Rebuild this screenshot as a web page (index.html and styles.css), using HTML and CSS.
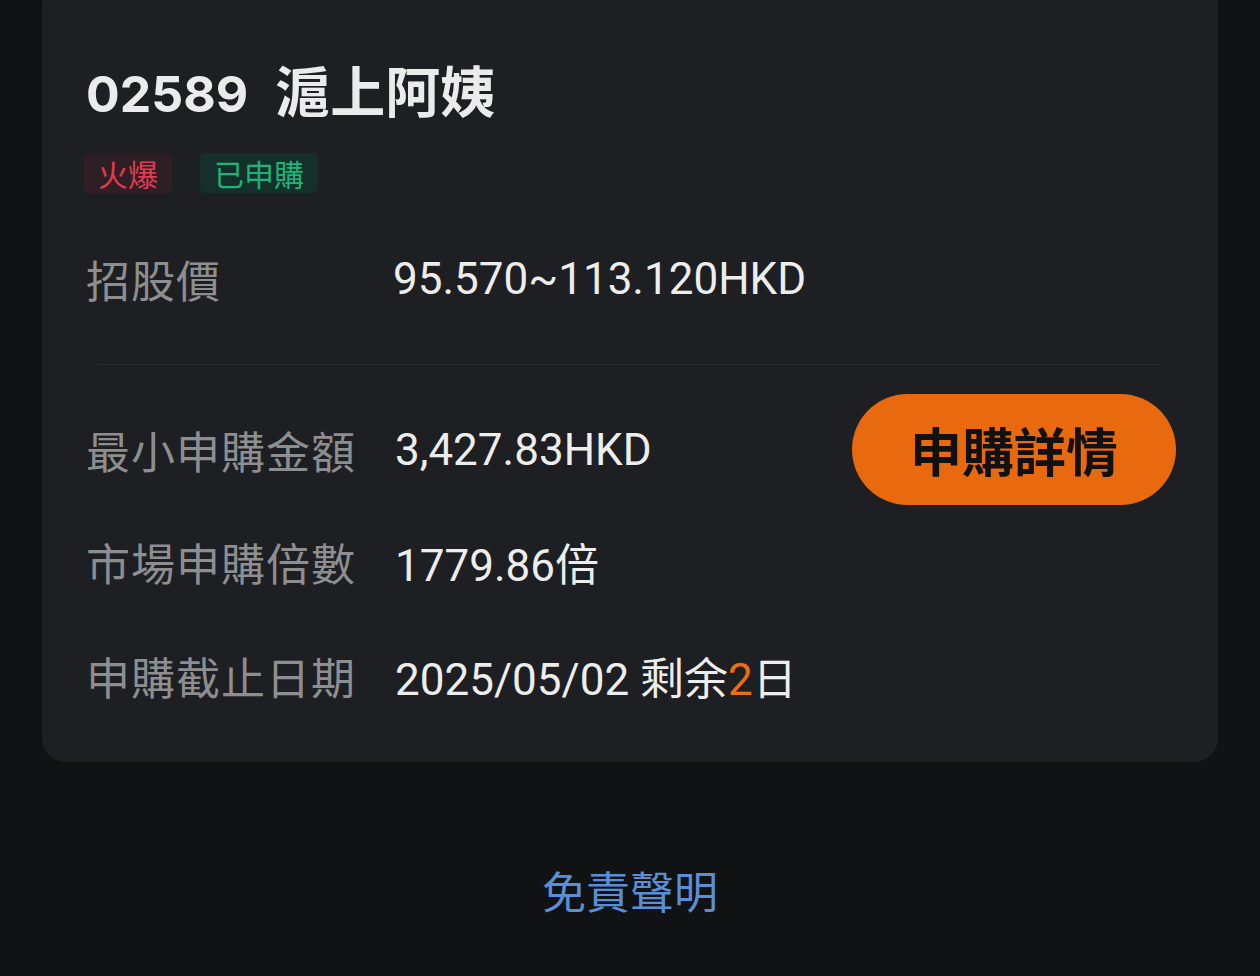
FILE: index.html
```html
<!DOCTYPE html>
<html lang="zh-Hant">
<head>
  <meta charset="UTF-8" />
  <meta name="viewport" content="width=device-width, initial-scale=1.0"/>
  <title>新股認購</title>
  <link rel="stylesheet" href="styles.css">
</head>
<body>
  <div class="card">
    <h1 class="title"><span class="code">02589</span>滬上阿姨</h1>

    <div class="tags">
      <span class="tag tag-hot">火爆</span>
      <span class="tag tag-done">已申購</span>
    </div>

    <div class="row price-row">
      <div class="label">招股價</div>
      <div class="value">95.570~113.120HKD</div>
    </div>

    <div class="divider"></div>

    <div class="details">
      <div class="row">
        <div class="label">最小申購金額</div>
        <div class="value">3,427.83HKD</div>
        <button class="detail-btn">申購詳情</button>
      </div>
      <div class="row">
        <div class="label">市場申購倍數</div>
        <div class="value">1779.86倍</div>
      </div>
      <div class="row">
        <div class="label">申購截止日期</div>
        <div class="value">2025/05/02 剩余<span class="days">2</span>日</div>
      </div>
    </div>
  </div>

  <div class="disclaimer">免責聲明</div>
</body>
</html>
```

FILE: styles.css
```css
* {
  box-sizing: border-box;
  margin: 0;
  padding: 0;
}

body {
  background-color: #111214;
  color: #ececec;
  font-family: Roboto, "Noto Sans CJK TC", sans-serif;
  height: 976px;
  overflow: hidden;
}

.card {
  background-color: #1e1f22;
  margin: -20px 42px 0;
  padding: 83px 44px 29px;
  border-radius: 24px;
}

.title {
  font-size: 55px;
  line-height: 60px;
  font-weight: 700;
  color: #ebebeb;
}

.title .code {
  font-family: Inter, "Noto Sans CJK TC", sans-serif;
  font-size: 50px;
  margin-right: 27px;
}

.tags {
  display: flex;
  gap: 28px;
  margin-top: 29px;
  margin-left: -2px;
}

.tag {
  height: 40px;
  line-height: 40px;
  padding: 0 14px;
  border-radius: 5px;
  font-family: "Noto Sans CJK TC", sans-serif;
  font-size: 30px;
}

.tag-hot {
  background-color: #2e1f24;
  color: #e23a50;
}

.tag-done {
  background-color: #15302a;
  color: #1db47a;
}

.row {
  display: flex;
  align-items: center;
  height: 114px;
}

.label {
  width: 309px;
  flex-shrink: 0;
  font-family: "Noto Sans CJK TC", sans-serif;
  font-size: 44px;
  letter-spacing: 1px;
  color: #8d8e90;
}

.value {
  font-size: 44px;
  color: #ededed;
  flex: 1;
}

.price-row {
  height: 60px;
  margin-top: 56px;
}

.price-row .label {
  width: 307px;
}

.divider {
  height: 1px;
  background-color: #2b2c30;
  margin: 55px 14px 29px 12px;
}

.details .row:first-child {
  height: 111px;
}

.days {
  color: #ee6d12;
}

.detail-btn {
  width: 324px;
  height: 111px;
  border: none;
  border-radius: 56px;
  background-color: #e8690e;
  color: #111;
  font-family: "Noto Sans CJK TC", sans-serif;
  font-size: 52px;
  font-weight: 700;
  margin-right: -2px;
  cursor: pointer;
}

.disclaimer {
  text-align: center;
  margin-top: 96px;
  font-family: "Noto Sans CJK TC", sans-serif;
  font-size: 44px;
  color: #5a8fd8;
}
```
